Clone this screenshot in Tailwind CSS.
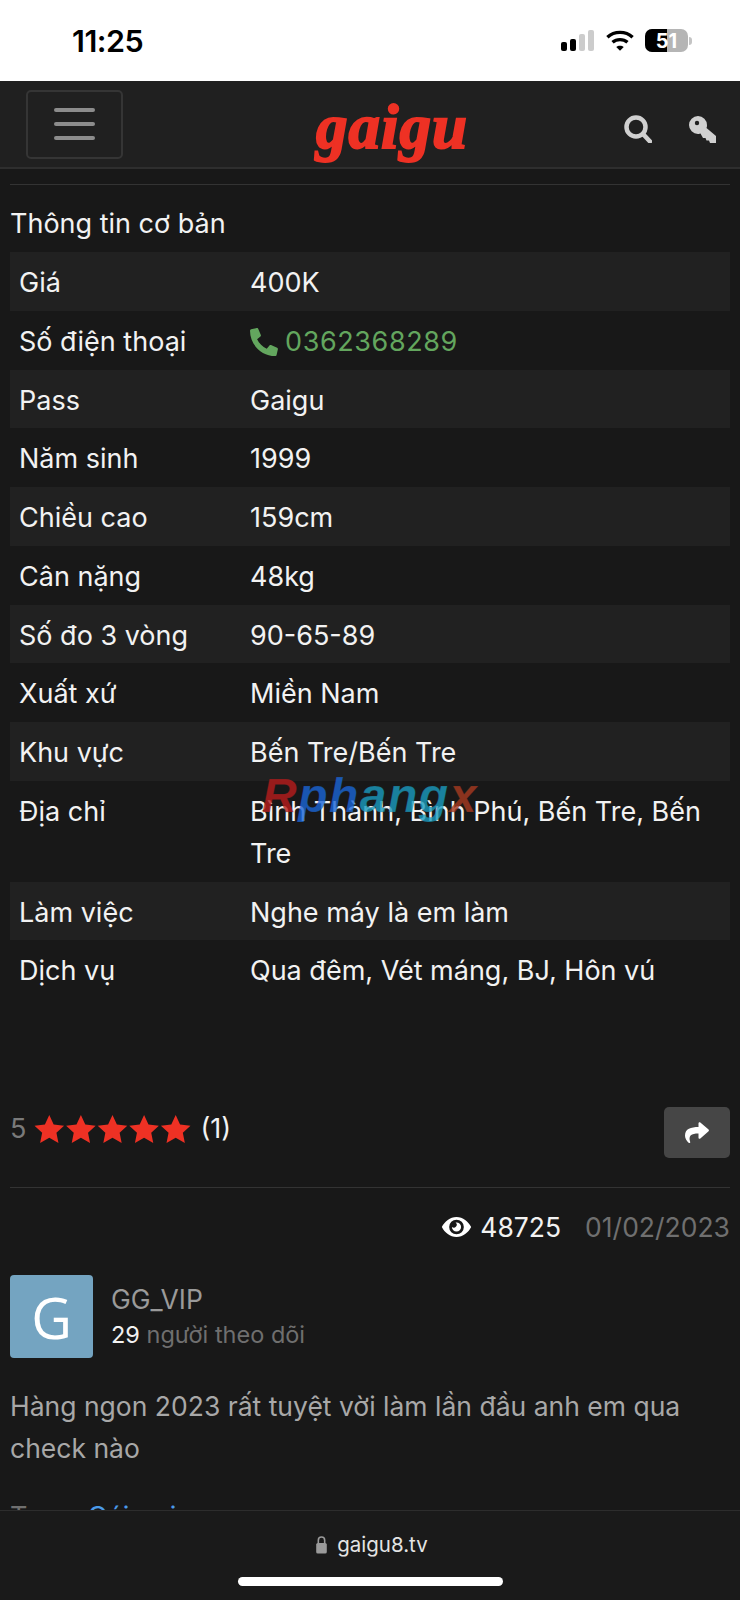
<!DOCTYPE html>
<html lang="vi">
  <head>
    <meta charset="UTF-8" />
    <meta name="viewport" content="width=device-width, initial-scale=1.0" />
    <title>gaigu</title>
    <script src="https://cdn.jsdelivr.net/npm/@tailwindcss/browser@4"></script>
  </head>
  <body class="bg-[#181818] font-['Inter',sans-serif] text-[27px] leading-[42px] text-[#f2f2f2]">
    <div class="relative h-[1600px] w-[740px] overflow-hidden">
      <!-- status bar -->
      <div class="flex h-[81px] items-center justify-between bg-white pl-[72px] pr-[48px] text-black">
        <span class="text-[30.500px] font-semibold tracking-[-0.5px]">11:25</span>
        <div class="flex items-center">
          <svg width="33" height="21" viewBox="0 0 33 21">
            <rect x="0" y="12" width="6" height="9" rx="2" fill="#000" />
            <rect x="9" y="9" width="6" height="12" rx="2" fill="#000" />
            <rect x="18" y="4" width="6" height="17" rx="2" fill="#ccc" />
            <rect x="27" y="0" width="6" height="21" rx="2" fill="#ccc" />
          </svg>
          <svg class="ml-[12px]" width="28" height="21" viewBox="0 0 30 22" fill="none" stroke="#000" stroke-width="3.600">
            <path d="M1.500 7.500C9 .5 21 .5 28.500 7.500" />
            <path d="M7 13c4.500-4 11.500-4 16 0" />
            <path d="M11 18l4 4 4-4c-2-2-6-2-8 0z" fill="#000" stroke="none" />
          </svg>
          <div class="ml-[11px] flex items-center">
            <div class="flex h-[23px] w-[43px] overflow-hidden rounded-[7px] bg-[#b5b5b5]">
              <div class="h-full w-[22px] bg-black"></div>
            </div>
            <div class="ml-[1px] h-[8px] w-[3px] rounded-r bg-[#c4c4c4]"></div>
          </div>
        </div>
      </div>
      <div class="absolute left-[645px] top-[29px] w-[43px] text-center text-[20px] leading-[24px] font-bold text-white">51</div>

      <!-- navbar -->
      <div class="flex h-[88px] items-center justify-between border-b-2 border-[#2e2e2e] bg-[#202020] pl-[26px] pr-[24px]">
        <button class="flex h-[69px] w-[97px] flex-col items-center justify-center gap-[10px] rounded-[5px] border-2 border-[#353535]">
          <span class="h-[4px] w-[41px] rounded-sm bg-[#8c8c8c]"></span>
          <span class="h-[4px] w-[41px] rounded-sm bg-[#8c8c8c]"></span>
          <span class="h-[4px] w-[41px] rounded-sm bg-[#8c8c8c]"></span>
        </button>
        <div class="absolute left-[316px] top-[92px] font-['Liberation_Serif',serif] text-[63px] leading-[70px] font-bold tracking-[1px] text-[#ee3124] italic [-webkit-text-stroke:2px_#ee3124]">gaigu</div>
        <div class="mt-[10px] flex items-center gap-[37px]">
          <svg width="28" height="28" viewBox="0 0 28 28" fill="none" stroke="#d0d0d0" stroke-width="4.500">
            <circle cx="12" cy="12" r="9.500" />
            <path d="M19 19l7 7.500" stroke-linecap="round" />
          </svg>
          <svg width="27" height="27" viewBox="0 0 27 27">
            <path fill="#d0d0d0" d="M9 0a9 9 0 0 1 9 9c0 1 0 2-.5 3L27 20v7h-6l-1-2.500h-2.500l-1-2.500H14l-2.500-4.500C10 18 9.500 18 9 18A9 9 0 0 1 9 0z" />
            <circle cx="8" cy="7" r="2.200" fill="#202020" />
          </svg>
        </div>
      </div>

      <main class="px-[10px]">
        <hr class="mt-[15px] border-[#333]" />
        <h2 class="mt-[18px] mb-[7px] font-normal">Thông tin cơ bản</h2>

        <div class="relative">
          <div class="grid grid-cols-[231px_1fr] bg-[#212121] pl-[9px] pr-[10px] pt-[10px] pb-[6.750px]"><span>Giá</span><span>400K</span></div>
          <div class="grid grid-cols-[231px_1fr] pl-[9px] pr-[10px] pt-[10px] pb-[6.750px]">
            <span>Số điện thoại</span>
            <span class="flex items-center gap-[7px] tracking-[0.6px] text-[#63a65e]">
              <svg width="28" height="28" viewBox="0 0 512 512" fill="currentColor"><path d="M493 24l-104-24c-11-3-23 3-27 14l-48 112c-4 10-1 21 7 28l61 50c-36 76-98 139-176 176l-50-61c-7-8-18-11-28-7L16 360c-11 5-17 16-14 28l24 104c3 11 12 20 24 20 256 0 462-207 462-462 0-12-8-22-19-26z" transform="matrix(-1 0 0 1 512 0)"/></svg>
              0362368289
            </span>
          </div>
          <div class="grid grid-cols-[231px_1fr] bg-[#212121] pl-[9px] pr-[10px] pt-[10px] pb-[6.750px]"><span>Pass</span><span>Gaigu</span></div>
          <div class="grid grid-cols-[231px_1fr] pl-[9px] pr-[10px] pt-[10px] pb-[6.750px]"><span>Năm sinh</span><span>1999</span></div>
          <div class="grid grid-cols-[231px_1fr] bg-[#212121] pl-[9px] pr-[10px] pt-[10px] pb-[6.750px]"><span>Chiều cao</span><span>159cm</span></div>
          <div class="grid grid-cols-[231px_1fr] pl-[9px] pr-[10px] pt-[10px] pb-[6.750px]"><span>Cân nặng</span><span>48kg</span></div>
          <div class="grid grid-cols-[231px_1fr] bg-[#212121] pl-[9px] pr-[10px] pt-[10px] pb-[6.750px]"><span>Số đo 3 vòng</span><span>90-65-89</span></div>
          <div class="grid grid-cols-[231px_1fr] pl-[9px] pr-[10px] pt-[10px] pb-[6.750px]"><span>Xuất xứ</span><span>Miền Nam</span></div>
          <div class="grid grid-cols-[231px_1fr] bg-[#212121] pl-[9px] pr-[10px] pt-[10px] pb-[6.750px]"><span>Khu vực</span><span>Bến Tre/Bến Tre</span></div>
          <div class="grid grid-cols-[231px_1fr] pl-[9px] pr-[10px] pt-[10px] pb-[6.750px]"><span>Địa chỉ</span><span>Bình Thành, Bình Phú, Bến Tre, Bến Tre</span></div>
          <div class="grid grid-cols-[231px_1fr] bg-[#212121] pl-[9px] pr-[10px] pt-[10px] pb-[6.750px]"><span>Làm việc</span><span>Nghe máy là em làm</span></div>
          <div class="grid grid-cols-[231px_1fr] pl-[9px] pr-[10px] pt-[10px] pb-[6.750px]"><span>Dịch vụ</span><span>Qua đêm, Vét máng, BJ, Hôn vú</span></div>
          <!-- watermark -->
          <div class="absolute left-[252px] top-[517px] font-['Liberation_Sans',sans-serif] text-[48px] leading-[54px] font-bold tracking-[1.500px] italic opacity-80 [-webkit-text-stroke:1px_rgba(40,40,40,0.2)]"><span class="text-[#b81c1c]">R</span><span class="text-[#1a66d8]">ph</span><span class="text-[#1a9cc0]">ang</span><span class="text-[#a83a20]">x</span></div>
        </div>

        <!-- rating -->
        <div class="mt-[108px] flex items-center justify-between">
          <div class="-mt-[8px] flex items-center gap-[8px]">
            <span class="text-[#7a7a7a]">5</span>
            <svg width="158" height="30" viewBox="0 0 155 29.400" fill="#ee3124">
              <path id="s" d="M15 1l4.300 9.200 10.200 1.200-7.500 7 2 10L15 23.400 6 28.400l2-10-7.500-7 10.200-1.200z" />
              <use href="#s" x="31" /><use href="#s" x="62" /><use href="#s" x="93" /><use href="#s" x="124" />
            </svg>
            <span>(1)</span>
          </div>
          <button class="flex h-[51px] w-[66px] items-center justify-center rounded-[5px] bg-[#464646]">
            <svg width="26" height="24" viewBox="0 0 512 512" fill="#fff"><path d="M503 183L327 31c-15-13-39-3-39 18v80C127 131 0 163 0 315c0 61 39 122 83 153 13 10 33-2 28-18-44-143 21-181 177-183v88c0 21 24 31 39 18l176-152c11-10 11-28 0-38z"/></svg>
          </button>
        </div>
        <hr class="mt-[29px] border-[#333]" />

        <div class="mt-[18px] flex items-center justify-end text-[26.500px] text-[#f2f2f2]">
          <svg class="mr-[8px]" width="31" height="22" viewBox="0 0 32 24" fill="#fff">
            <path fill-rule="evenodd" d="M16 1c7 0 13 5 16 11-3 6-9 11-16 11S3 18 0 12C3 6 9 1 16 1zm0 3a8 8 0 100 16 8 8 0 000-16z" />
            <path d="M16 7a5 5 0 11-5 5 3 3 0 004-5z" />
          </svg>
          <span>48725</span>
          <span class="ml-[24px] text-[#6f6f6f]">01/02/2023</span>
        </div>

        <!-- author -->
        <div class="mt-[27px] flex gap-[18px]">
          <div class="flex h-[83px] w-[83px] items-center justify-center rounded-[4px] bg-[#74a4c1] font-['Open_Sans',sans-serif] text-[56px] text-white">G</div>
          <div class="pt-[3px]">
            <div class="text-[26.500px] leading-[42px] text-[#9a9a9a]">GG_VIP</div>
            <div class="-mt-[3px] text-[23.500px] leading-[36px] text-[#6f6f6f]"><span class="text-[#f2f2f2]">29</span> người theo dõi</div>
          </div>
        </div>

        <p class="mt-[27px] text-[26.500px] text-[#a8a8a8]">Hàng ngon 2023 rất tuyệt vời làm lần đầu anh em qua check nào</p>
        <div class="mt-[27px] text-[#6f6f6f]">Tag: <span class="ml-[15px] text-[#4a9ae8]">Gái gọi</span></div>
      </main>

      <!-- safari bottom bar -->
      <div class="absolute inset-x-0 bottom-0 h-[90px] border-t border-[#2d2d2d] bg-[#1a1a1a]">
        <div class="mt-[19px] flex items-center justify-center gap-[10px] pl-[4px] text-[20.500px] leading-[30px] text-[#e4e4e4]">
          <svg width="11" height="18" viewBox="0 0 10 17">
            <path d="M2 7V4a3 3 0 016 0v3" fill="none" stroke="#9a9a9a" stroke-width="1.500" />
            <rect y="6.500" width="10" height="10" rx="1.500" fill="#9a9a9a" />
          </svg>
          gaigu8.tv
        </div>
        <div class="mx-auto mt-[17px] h-[9px] w-[265px] rounded-full bg-white"></div>
      </div>
    </div>
  </body>
</html>
